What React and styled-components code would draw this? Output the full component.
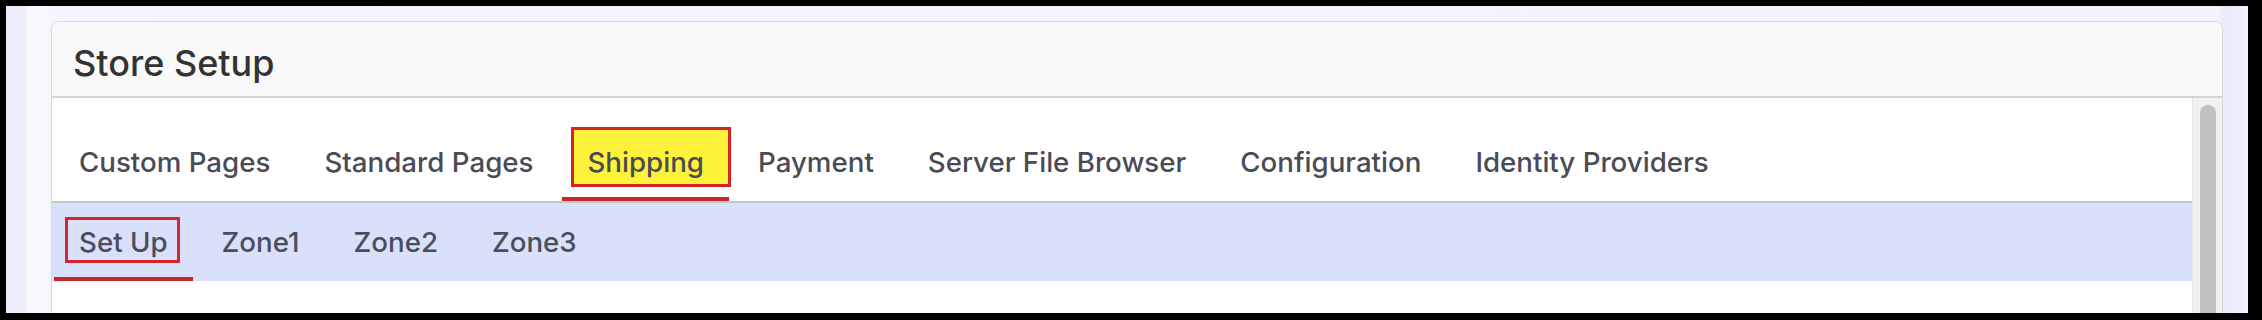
import React from "react";
import styled, { createGlobalStyle } from "styled-components";

const Global = createGlobalStyle`
  html, body { margin: 0; padding: 0; background: #000; }
  body { font-family: Inter, "Noto Sans", sans-serif; -webkit-font-smoothing: antialiased; }
  #root { height: 320px; overflow: hidden; }
`;

const Frame = styled.div`
  margin: 6px 14px 0 6px;
  height: 307px;
  overflow: hidden;
  box-sizing: border-box;
  padding: 15px 25px 0 45px;
  background: linear-gradient(
    90deg,
    #eceffb 0,
    #eceffb 20px,
    #fafafe 21px,
    #f4f5fd 60px,
    #f3f4fc calc(100% - 30px),
    #e8ebfb calc(100% - 24px),
    #eff1fc calc(100% - 3px),
    #f6f6fd 100%
  );
`;

const Card = styled.section`
  background: #fff;
  border: 1px solid #d7d7dc;
  border-radius: 8px;
  overflow: hidden;
  height: 400px;
  display: flex;
  flex-direction: column;
`;

const Header = styled.header`
  background: #f9f9f9;
  border-bottom: 2px solid #d4d4d6;
  height: 76px;
  flex: none;
  box-sizing: border-box;
  padding: 20px 0 0 21px;
`;

const Title = styled.h2`
  margin: 0;
  font-size: 36px;
  font-weight: 500;
  color: #333;
  line-height: 42px;
`;

const Body = styled.div`
  flex: 1;
  display: flex;
  min-height: 0;
`;

const Content = styled.div`
  flex: 1;
  min-width: 0;
`;

const TabBar = styled.nav`
  display: flex;
  align-items: flex-end;
  background: ${(p) => p.$bg};
  border-bottom: ${(p) => (p.$divider ? "2px solid #c6c6ca" : "none")};
`;

const Tab = styled.div`
  padding: ${(p) => p.$pt}px 27px ${(p) => p.$pb}px;
  font-size: 27.7px;
  font-weight: 500;
  line-height: 33px;
  color: ${(p) => p.$color};
  white-space: nowrap;
  background: ${(p) =>
    p.$active ? "linear-gradient(#c1272d, #c1272d) no-repeat" : "none"};
  background-size: calc(100% - 4px) 4px;
  background-position: center bottom;
`;

const Mark = styled.span`
  display: block;
  border: 3px solid #d8232a;
  background: ${(p) => p.$fill || "transparent"};
  padding: ${(p) => `${p.$t - 3}px ${p.$r - 3}px ${p.$b - 3}px ${p.$l - 3}px`};
  margin: ${(p) => `-${p.$t}px -${p.$r}px -${p.$b}px -${p.$l}px`};
`;

const Rest = styled.div`
  height: 200px;
  background: #fff;
`;

const Track = styled.div`
  width: 30px;
  flex: none;
  background: #f1f1f1;
  border-left: 1px solid #e4e4e4;
  box-sizing: border-box;
  padding: 7px 6px 0 7px;
`;

const Thumb = styled.div`
  height: 300px;
  background: #c1c1c1;
  border-radius: 8px;
`;

const mainTabs = [
  "Custom Pages",
  "Standard Pages",
  "Shipping",
  "Payment",
  "Server File Browser",
  "Configuration",
  "Identity Providers",
];
const subTabs = ["Set Up", "Zone1", "Zone2", "Zone3"];

export default function App() {
  return (
    <>
      <Global />
      <Frame>
        <Card>
          <Header>
            <Title>Store Setup</Title>
          </Header>
          <Body>
            <Content>
              <TabBar $bg="#fff" $divider>
                {mainTabs.map((t) => (
                  <Tab
                    key={t}
                    $pt={48}
                    $pb={22}
                    $color="#4a4b55"
                    $active={t === "Shipping"}
                  >
                    {t === "Shipping" ? (
                      <Mark $fill="#fef23a" $t={18.7} $b={8.3} $l={16} $r={27}>
                        {t}
                      </Mark>
                    ) : (
                      t
                    )}
                  </Tab>
                ))}
              </TabBar>
              <TabBar $bg="#d9e0f9">
                {subTabs.map((t) => (
                  <Tab
                    key={t}
                    $pt={23}
                    $pb={22}
                    $color="#4a4e5c"
                    $active={t === "Set Up"}
                  >
                    {t === "Set Up" ? (
                      <Mark $t={8.7} $b={4.3} $l={14} $r={12}>
                        {t}
                      </Mark>
                    ) : (
                      t
                    )}
                  </Tab>
                ))}
              </TabBar>
              <Rest />
            </Content>
            <Track>
              <Thumb />
            </Track>
          </Body>
        </Card>
      </Frame>
    </>
  );
}
